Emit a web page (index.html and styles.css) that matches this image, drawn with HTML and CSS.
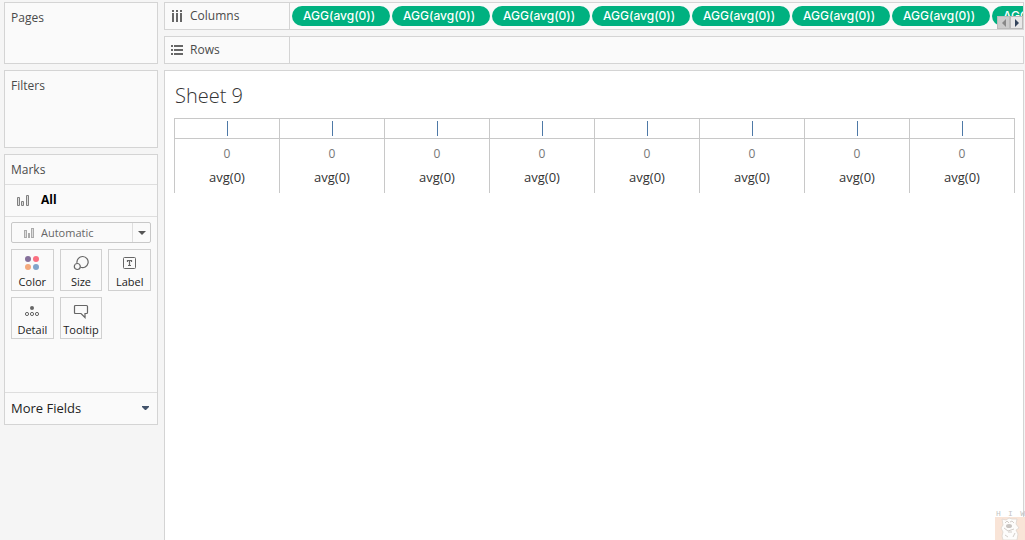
FILE: index.html
```html
<!DOCTYPE html>
<html lang="en">
<head>
<meta charset="utf-8">
<title>Sheet 9</title>
<link rel="stylesheet" href="styles.css">
</head>
<body>
<div class="app">
  <aside class="cards">
    <section class="panel pages"><h2 class="card-title">Pages</h2></section>
    <section class="panel filters"><h2 class="card-title">Filters</h2></section>
    <section class="panel marks">
      <h2 class="card-title marks-title">Marks</h2>
      <button class="all-row" type="button">
        <svg width="14" height="14" viewBox="0 0 14 14" fill="#ddd" stroke="#808080"><path d="M1.500 4.500h2v8h-2zM5.500 8.500h2v4h-2zM10.500 2.500h2v10h-2z"/></svg>
        <span>All</span>
      </button>
      <div class="marks-body">
        <div class="mark-type">
          <svg class="type-icon" width="12" height="12" viewBox="0 0 12 12"><path d="M1 3h3v8H1zM5 6h2v5H5zM8 1h3v10H8z" fill="#aaa"/><path d="M2 4h1v6H2zM9 2h1v8H9z" fill="#ddd"/></svg>
          <select class="type-select" aria-label="Mark type"><option>Automatic</option></select>
          <span class="type-arrow"><svg width="8" height="4" viewBox="0 0 8 4"><path d="M0 0h8L4 4z" fill="#555"/></svg></span>
        </div>
        <div class="mark-grid">
          <button class="mark" type="button">
            <svg width="16" height="16" viewBox="0 0 16 16"><circle cx="4" cy="4" r="3" fill="#85709a"/><circle cx="12" cy="4" r="3" fill="#fa6f80"/><circle cx="4" cy="12" r="3" fill="#f4a97c"/><circle cx="12" cy="12" r="3" fill="#80a4ca"/></svg>
            <span>Color</span>
          </button>
          <button class="mark" type="button">
            <svg width="16" height="16" viewBox="0 0 16 16" fill="none" stroke="#666" stroke-width="1.200"><path d="M4 7.800A5.600 5.600 0 1 1 7.500 12.300"/><circle cx="4.300" cy="11.500" r="3"/></svg>
            <span>Size</span>
          </button>
          <button class="mark" type="button">
            <svg width="16" height="16" viewBox="0 0 16 16" fill="none" stroke="#666"><rect x="1.500" y="2.500" width="12" height="11" rx="1"/><path d="M5.500 7V5.500h4V7M7.500 5.500v5M6 10.500h3" stroke-width="1.200"/></svg>
            <span>Label</span>
          </button>
          <button class="mark" type="button">
            <svg width="16" height="16" viewBox="0 0 16 16" fill="none" stroke="#666"><circle cx="8" cy="5" r="2" fill="#666" stroke="none"/><circle cx="3" cy="11" r="1.600"/><circle cx="8" cy="11" r="1.600"/><circle cx="13" cy="11" r="1.600"/></svg>
            <span>Detail</span>
          </button>
          <button class="mark" type="button">
            <svg width="16" height="16" viewBox="0 0 16 16" fill="none" stroke="#666" stroke-width="1.200"><path d="M2.500 2.500h11q1 0 1 1v6q0 1-1 1h-1.500v4l-4-4H2.500q-1 0-1-1v-6q0-1 1-1z"/></svg>
            <span>Tooltip</span>
          </button>
        </div>
      </div>
      <button class="more" type="button"><span>More Fields</span><svg width="7" height="4" viewBox="0 0 7 4"><path d="M0 0h7v1L4 4H3L0 1z" fill="#42536b"/></svg></button>
    </section>
  </aside>
  <main class="work">
    <section class="panel shelf">
      <h2 class="shelf-label"><svg width="12" height="12" viewBox="0 0 12 12" fill="#666"><path d="M1 0h2v2H1zM5 0h2v2H5zM9 0h2v2H9zM1 3h2v9H1zM5 3h2v9H5zM9 3h2v9H9z"/></svg>Columns</h2>
      <div class="pills">
        <button class="pill" type="button">AGG(avg(0))</button>
        <button class="pill" type="button">AGG(avg(0))</button>
        <button class="pill" type="button">AGG(avg(0))</button>
        <button class="pill" type="button">AGG(avg(0))</button>
        <button class="pill" type="button">AGG(avg(0))</button>
        <button class="pill" type="button">AGG(avg(0))</button>
        <button class="pill" type="button">AGG(avg(0))</button>
        <button class="pill" type="button">AGG(avg(0))</button>
      </div>
      <div class="scroller">
        <button class="scroll off" type="button" aria-label="Scroll left" disabled><svg width="4" height="8" viewBox="0 0 4 8"><path d="M4 0v8L0 4z" fill="#888"/></svg></button>
        <button class="scroll" type="button" aria-label="Scroll right"><svg width="4" height="8" viewBox="0 0 4 8"><path d="M0 0v8l4-4z" fill="#34445c"/></svg></button>
      </div>
    </section>
    <section class="panel shelf">
      <h2 class="shelf-label"><svg width="12" height="12" viewBox="0 0 12 12" fill="#666"><path d="M0 1h2v2H0zM0 5h2v2H0zM0 9h2v2H0zM3 1h9v2H3zM3 5h9v2H3zM3 9h9v2H3z"/></svg>Rows</h2>
    </section>
    <section class="panel sheet">
      <h1 class="sheet-title">Sheet 9</h1>
      <table class="view">
        <tbody>
          <tr class="plot"><td><i class="tick"></i></td><td><i class="tick"></i></td><td><i class="tick"></i></td><td><i class="tick"></i></td><td><i class="tick"></i></td><td><i class="tick"></i></td><td><i class="tick"></i></td><td><i class="tick"></i></td></tr>
          <tr class="axis"><td>0</td><td>0</td><td>0</td><td>0</td><td>0</td><td>0</td><td>0</td><td>0</td></tr>
          <tr class="names"><th>avg(0)</th><th>avg(0)</th><th>avg(0)</th><th>avg(0)</th><th>avg(0)</th><th>avg(0)</th><th>avg(0)</th><th>avg(0)</th></tr>
        </tbody>
      </table>
    </section>
  </main>
  <div class="watermark">
    <div class="watermark-text"><span>H</span><span>I</span><span>W</span></div>
    <svg width="30" height="23" viewBox="0 0 30 23"><path d="M0 0h30v23H0z" fill="#f9e4d7"/><path d="M7 2l4 1 3-2 3 1 5 0-1 5 3 4-3 2 2 4-1 6H8l-1-4 1-4-2-4 2-3z" fill="#fdfcfb" stroke="#ddd5cf" stroke-width=".8"/><path d="M10 6l2-2 2 2M15 5l2-1 2 2M9 11l4 3 6-2M13 15h4M10 18l3 2M20 16l-2 4" fill="none" stroke="#d3ceca"/><ellipse cx="14" cy="9" rx="3" ry="2" fill="#c8c4c1"/></svg>
  </div>
</div>
</body>
</html>
```
FILE: styles.css
```css
* { box-sizing: border-box; }

body {
  margin: 0;
  background: #f5f5f5;
  color: #4a4a4a;
  font: 12px/16px "Open Sans", "Noto Sans", sans-serif;
}

button, select { font: inherit; color: inherit; }
button { padding: 0; border: 0; background: none; }
h1, h2 { margin: 0; font-weight: 400; }
svg { display: block; flex: none; }

.app {
  position: relative;
  display: flex;
  gap: 6px;
  min-height: 100vh;
  padding: 2px 1px 0 4px;
  overflow: hidden;
}

.panel { border: 1px solid #d4d4d4; background: #fafafa; }

.cards {
  display: flex;
  flex: none;
  flex-direction: column;
  gap: 6px;
  width: 154px;
}
.card-title { padding: 7px 6px; font-size: 12px; line-height: 16px; }
.pages { min-height: 62px; }
.filters { min-height: 78px; }

.marks-title { border-bottom: 1px solid #dedede; padding-bottom: 6px; }
.all-row {
  display: flex;
  align-items: center;
  gap: 11px;
  width: 100%;
  height: 32px;
  padding: 0 11px 2px;
  border-bottom: 1px solid #dedede;
  color: #000;
  font-weight: 700;
}
.marks-body { min-height: 175px; padding: 5px 6px; }

.mark-type {
  display: grid;
  grid-template-columns: 11px 1fr 18px;
  height: 21px;
  margin-bottom: 6px;
  border: 1px solid #c8c8c8;
  border-radius: 2px;
}
.type-icon { grid-area: 1 / 2; align-self: center; }
.type-select {
  grid-area: 1 / 1 / 2 / 4;
  width: 100%;
  padding: 0 18px 0 29px;
  border: 0;
  background: none;
  appearance: none;
  color: #666;
  font-size: 11px;
}
.type-arrow {
  display: grid;
  grid-area: 1 / 3;
  place-items: center;
  border-left: 1px solid #dedede;
  pointer-events: none;
}

.mark-grid {
  display: grid;
  grid-template-columns: repeat(3, 1fr);
  gap: 6px;
}
.mark {
  display: flex;
  flex-direction: column;
  align-items: center;
  gap: 3px;
  height: 42px;
  padding-top: 5px;
  border: 1px solid #d0d0d0;
  color: #222;
  font-size: 11px;
  line-height: 16px;
}

.more {
  display: flex;
  align-items: center;
  justify-content: space-between;
  width: 100%;
  height: 32px;
  padding: 0 8px 1px 6px;
  border-top: 1px solid #dedede;
  color: #222;
  font-size: 13px;
}

.work {
  display: flex;
  flex: 1;
  flex-direction: column;
  gap: 6px;
  min-width: 0;
}
.shelf { position: relative; display: flex; height: 28px; }
.shelf-label {
  display: flex;
  flex: none;
  align-items: center;
  gap: 7px;
  width: 125px;
  padding-left: 6px;
  border-right: 1px solid #d4d4d4;
  font-size: 12px;
}
.pills {
  display: flex;
  flex: 1;
  align-items: center;
  gap: 2px;
  min-width: 0;
  padding-left: 2px;
  overflow: hidden;
}
.pill {
  flex: none;
  width: 98px;
  height: 20px;
  padding-left: 11px;
  border-radius: 10px;
  background: #00b180;
  color: #fff;
  font-family: Inter, "Open Sans", sans-serif;
  font-size: 12px;
  font-weight: 500;
  text-align: left;
}
.scroller { position: absolute; right: 0; bottom: 0; display: flex; }
.scroll {
  display: grid;
  place-items: center;
  width: 13px;
  height: 13px;
  border: 1px solid #bbb;
  background: #e8e8e8;
}
.off { background: #ccc; }

.sheet {
  flex: 1;
  padding: 12px 8px 12px 9px;
  border-bottom: 0;
  background: #fff;
}
.sheet-title {
  padding-left: 1px;
  font-size: 20px;
  font-weight: 300;
  line-height: 26px;
  color: #333;
}
.view {
  width: 100%;
  margin-top: 9px;
  border-collapse: collapse;
  table-layout: fixed;
}
.view td, .view th {
  padding: 0;
  border-right: 1px solid #c8c8c8;
  border-left: 1px solid #c8c8c8;
  text-align: center;
}
.view .plot td {
  height: 20px;
  padding-left: 1px;
  border-top: 1px solid #c8c8c8;
  border-bottom: 1px solid #c8c8c8;
}
.tick { display: block; width: 1px; height: 15px; margin: auto; background: #4e79a7; }
.view .axis td { height: 28px; padding-top: 2px; color: #777; }
.view .names th {
  height: 26px;
  padding-bottom: 5px;
  color: #333;
  font-size: 13px;
  font-weight: 500;
}

.watermark { position: absolute; right: 0; bottom: 0; width: 30px; }
.watermark-text {
  display: flex;
  justify-content: space-between;
  padding-left: 1px;
  color: #c4c4c4;
  font: 8px/7px "Liberation Mono", monospace;
}
```
